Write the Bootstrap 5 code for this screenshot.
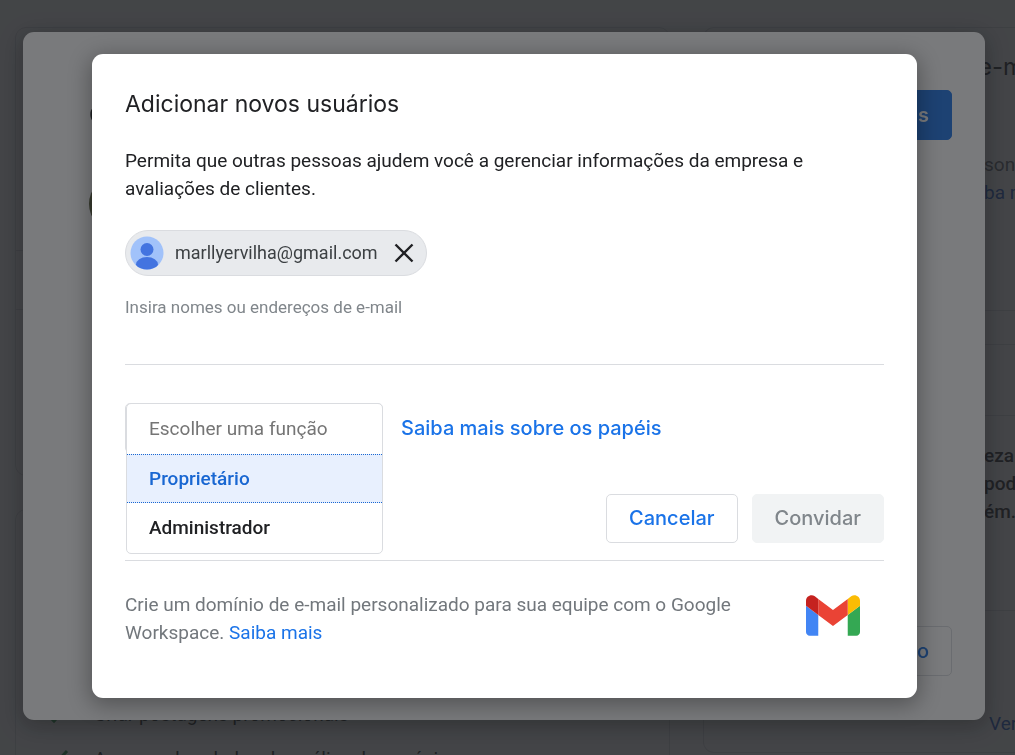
<!DOCTYPE html>
<html lang="pt-BR">
<head>
<meta charset="utf-8">
<meta name="viewport" content="width=device-width, initial-scale=1">
<title>Adicionar novos usuários</title>
<link href="https://cdn.jsdelivr.net/npm/bootstrap@5.3.0/dist/css/bootstrap.min.css" rel="stylesheet">
<style>
  :root { --blue: #1a73e8; --ink: #202124; --muted-ink: #80868b; --line: #dadce0; }
  body { font: 400 19px/28px Roboto, sans-serif; color: var(--ink); background: #fff; }
  a { color: var(--blue); text-decoration: none; }
  .display-face { font-family: Inter, sans-serif; }

  /* page under the dialogs */
  .page-grid { display: grid; grid-template-columns: 655px minmax(0, 1fr); gap: 33px; padding: 27px 0 0 15px; }
  .page-grid a { color: #1a56c4; }
  .page-stack { display: grid; gap: 33px; align-content: start; }
  .panel { border: 1px solid var(--line); border-radius: 11px; }
  .panel-rule { border-top: 1px solid var(--line); }
  .panel-tall { height: 449px; padding-top: 222px; }
  .panel-tall .panel-rule { height: 59px; }
  .perks { padding: 191px 0 40px 29px; gap: 16px; }
  .perks svg { width: 24px; height: 24px; margin-right: 25px; }
  .panel-side { border-right: 0; border-radius: 11px 0 0 11px; overflow: hidden; white-space: nowrap; }
  .side-copy { padding-left: 280px; }
  .side-top { height: 284px; padding-top: 25px; }
  .side-low { height: 409px; padding-top: 70px; }
  .side-low .side-copy { height: 194px; padding-top: 26px; }
  .side-more { padding: 99px 0 0 285px; }
  .side-title { font-size: 24px; margin-left: -6px; margin-bottom: 70px; }
  .soft { color: #5f6368; }

  /* dialogs */
  .veil { position: fixed; inset: 0; display: flex; background: rgba(32, 33, 36, .6); }
  .veil-back { padding: 32px 30px 35px 23px; }
  .veil-front { padding: 54px 98px 54px 92px; align-items: flex-start; }
  .sheet { flex: 1; background: #fff; border-radius: 11px; box-shadow: 0 5px 22px 2px rgba(0, 0, 0, .32); }
  .sheet-back { padding: 58px 33px 44px 66px; }
  .sheet-front { padding: 34px 33px 51px; }
  .face { width: 56px; height: 56px; border-radius: 50%; background: #5d6340; margin-top: 36px; }
  .btn-tall { --bs-btn-border-radius: 5px; --bs-btn-padding-x: 22px; --bs-btn-padding-y: 10px; font: 500 20px/28px Inter, sans-serif; }
  .actions .btn-tall { line-height: 27px; }
  .btn-solid { --bs-btn-bg: #1a73e8; --bs-btn-color: #fff; --bs-btn-border-color: #1a73e8; font-weight: 600; }
  .btn-line { --bs-btn-bg: #fff; --bs-btn-color: #1a73e8; --bs-btn-border-color: #dadce0; }
  .btn-off { --bs-btn-disabled-bg: #f1f3f4; --bs-btn-disabled-color: #80868b; --bs-btn-disabled-border-color: #f1f3f4; --bs-btn-disabled-opacity: 1; }

  .title { font: 400 23px/32px Inter, sans-serif; margin: 0 0 27px; }
  .intro { margin: 0 0 27px; }
  .chip { height: 46px; padding: 0 12px 0 4px; border: 1px solid var(--line); border-radius: 23px; background: #e8eaed; color: #3c4043; font-size: 18px; }
  .chip-face { width: 34px; height: 34px; margin-right: 11px; }
  .chip-x { border: 0; padding: 0; background: none; display: flex; margin-left: 16px; }
  .hint { font-size: 17px; line-height: 24px; color: var(--muted-ink); margin: 19px 0 45px; }
  .rule { border-top: 1px solid var(--line); }
  .role-row { margin-top: 38px; gap: 18px; }
  .role-box { position: relative; width: 258px; height: 50px; border: 1px solid var(--line); border-radius: 5px; }
  .role-menu { position: absolute; top: -1px; left: 0; width: 257px; height: 151px; padding: 0; border: 1px solid var(--line); border-radius: 5px; background: #fff; overflow: hidden; font: 500 19px/28px Roboto, sans-serif; outline: 0; }
  .role-menu option { padding: 13px 22px 14px; color: var(--ink); font-weight: 500; }
  .role-menu option:disabled { color: #757575; font-weight: 400; }
  .role-menu .is-hot { padding: 12px 22px; background: #e8f0fe; color: #1967d2; border: dotted #1967d2; border-width: 1px 0; }
  .link-strong { font: 500 20px/28px Inter, sans-serif; }
  .actions { gap: 14px; margin: 41px 0 17px; }
  .promo { margin-top: 30px; padding-right: 24px; color: #72777c; }
  .promo p { max-width: 630px; }
</style>
</head>
<body>

<div class="vh-100 overflow-hidden">
  <main class="page-grid" aria-hidden="true">
    <div class="page-stack">
      <section class="panel panel-tall">
        <div class="panel-rule"></div>
        <div class="panel-rule"></div>
      </section>
      <section class="panel perks d-flex flex-column">
        <div class="d-flex align-items-center">
          <svg viewBox="0 0 24 24" fill="none" stroke="#1e8e3e" stroke-width="3"><path d="M3 12l6 6L22 4"/></svg>
          <span>Criar postagens promocionais</span>
        </div>
        <div class="d-flex align-items-center">
          <svg viewBox="0 0 24 24" fill="none" stroke="#1e8e3e" stroke-width="3"><path d="M3 12l6 6L22 4"/></svg>
          <span>Acompanhar dados da análise do negócio</span>
        </div>
      </section>
    </div>
    <div class="page-stack">
      <section class="panel panel-side side-top">
        <div class="side-copy">
          <div class="side-title display-face">e-mail</div>
          <div class="soft">sonalizado</div>
          <a href="#">ba mais</a>
        </div>
      </section>
      <section class="panel panel-side side-low">
        <div class="panel-rule"></div>
        <div class="side-copy fw-medium">eza<br>pode<br>ém.</div>
        <div class="panel-rule"></div>
        <div class="side-more"><a href="#">Ver mais</a></div>
      </section>
    </div>
  </main>
</div>

<div class="veil veil-back">
  <section class="sheet sheet-back d-flex flex-column">
    <div class="d-flex justify-content-between align-items-center">
      <h2 class="title m-0">Gerenciar</h2>
      <button type="button" class="btn btn-tall btn-solid">Adicionar usuários</button>
    </div>
    <div class="face"></div>
    <button type="button" class="btn btn-tall btn-line mt-auto ms-auto">Concluído</button>
  </section>
</div>

<div class="veil veil-front">
  <section class="sheet sheet-front" role="dialog" aria-labelledby="dlg-title">
    <h1 class="title" id="dlg-title">Adicionar novos usuários</h1>
    <p class="intro">Permita que outras pessoas ajudem você a gerenciar informações da empresa e avaliações de clientes.</p>
    <div class="d-flex">
      <div class="chip d-flex align-items-center">
        <svg class="chip-face" viewBox="0 0 34 34" aria-hidden="true">
          <defs><clipPath id="disc"><circle cx="17" cy="17" r="16.5"/></clipPath></defs>
          <circle cx="17" cy="17" r="16.5" fill="#a1c2fa"/>
          <g fill="#4374e0" clip-path="url(#disc)"><circle cx="17" cy="13.5" r="6.5"/><ellipse cx="17" cy="28.5" rx="11" ry="7.5"/></g>
        </svg>
        <span>marllyervilha@gmail.com</span>
        <button type="button" class="chip-x" aria-label="Remover">
          <svg width="20" height="20" viewBox="0 0 20 20" fill="none" stroke="#202124" stroke-width="2.4"><path d="M1.5 1.5l17 17M18.5 1.5l-17 17"/></svg>
        </button>
      </div>
    </div>
    <p class="hint">Insira nomes ou endereços de e-mail</p>
    <div class="rule"></div>
    <div class="role-row d-flex align-items-center">
      <div class="role-box">
        <select class="role-menu" size="3" aria-label="Escolher uma função">
          <option disabled>Escolher uma função</option>
          <option class="is-hot">Proprietário</option>
          <option>Administrador</option>
        </select>
      </div>
      <a href="#" class="link-strong">Saiba mais sobre os papéis</a>
    </div>
    <div class="actions d-flex justify-content-end">
      <button type="button" class="btn btn-tall btn-line">Cancelar</button>
      <button type="button" class="btn btn-tall btn-off" disabled>Convidar</button>
    </div>
    <div class="rule"></div>
    <div class="promo d-flex justify-content-between align-items-start">
      <p class="m-0">Crie um domínio de e-mail personalizado para sua equipe com o Google Workspace. <a href="#">Saiba mais</a></p>
      <svg class="flex-shrink-0 mt-1" width="54" height="41" viewBox="52 42 88 66" role="img" aria-label="Gmail">
        <path fill="#4285f4" d="M58 108h14V74L52 59v43c0 3.32 2.69 6 6 6"/>
        <path fill="#34a853" d="M120 108h14c3.32 0 6-2.69 6-6V59l-20 15"/>
        <path fill="#fbbc04" d="M120 48v26l20-15v-8c0-7.42-8.47-11.65-14.4-7.2"/>
        <path fill="#ea4335" d="M72 74V48l24 18 24-18v26L96 92"/>
        <path fill="#c5221f" d="M52 51v8l20 15V48l-5.6-4.2c-5.94-4.45-14.4-.22-14.4 7.2"/>
      </svg>
    </div>
  </section>
</div>

<script src="https://cdn.jsdelivr.net/npm/bootstrap@5.3.0/dist/js/bootstrap.bundle.min.js"></script>
</body>
</html>
